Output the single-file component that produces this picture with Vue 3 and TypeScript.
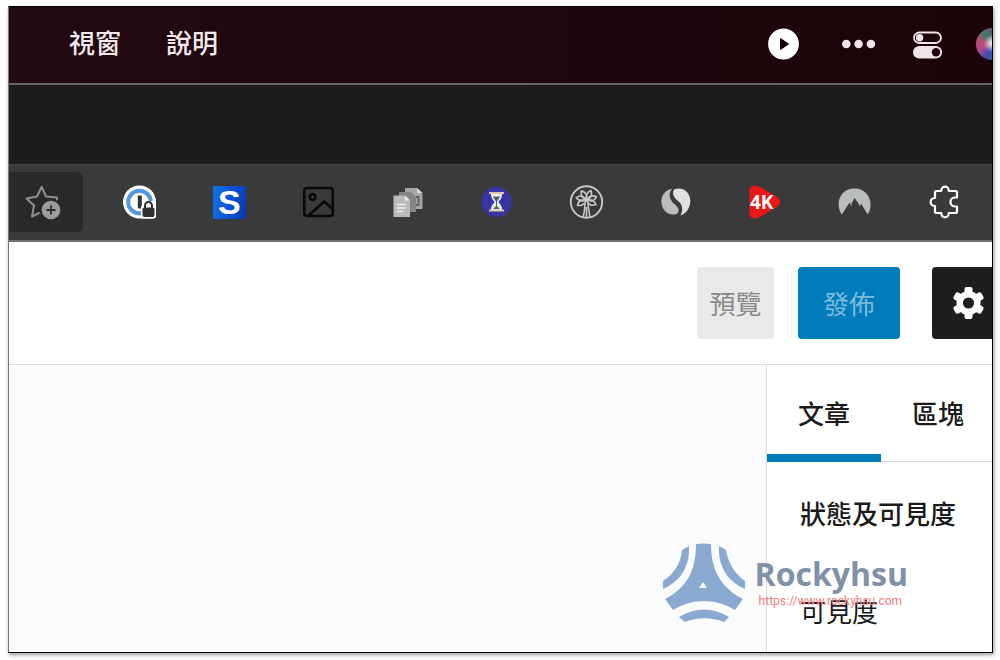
<script setup lang="ts">
import { ref } from 'vue'

type TabId = 'post' | 'block'
interface Tab { id: TabId; label: string }

const menus: string[] = ['視窗', '說明']
const tabs: Tab[] = [
  { id: 'post', label: '文章' },
  { id: 'block', label: '區塊' },
]
const activeTab = ref<TabId>('post')
const fronds: number[] = [-118, -74, -27, 27, 74, 118]
const teeth: number[] = [0, 60, 120, 180, 240, 300]
</script>

<template>
  <div class="page">
    <main class="screen">
      <header class="menubar">
        <nav class="menus">
          <button v-for="m in menus" :key="m" type="button" class="menu">{{ m }}</button>
        </nav>
        <div class="status">
          <button type="button" class="status-btn" aria-label="播放">
            <svg width="32" height="32" viewBox="0 0 32 32"><circle cx="15.500" cy="16" r="15.400" fill="#fff" /><path d="M12.500 10.500 L20.500 16 L12.500 21.500Z" fill="#150509" stroke="#150509" stroke-linejoin="round" /></svg>
          </button>
          <button type="button" class="status-btn more" aria-label="更多">
            <svg width="34" height="32" viewBox="0 0 34 32" fill="#eee5e8"><circle cx="4.300" cy="16" r="4.300" /><circle cx="16.600" cy="16" r="4.300" /><circle cx="28.900" cy="16" r="4.300" /></svg>
          </button>
          <button type="button" class="status-btn" aria-label="控制中心">
            <svg width="32" height="32" viewBox="0 0 32 32"><rect x="2" y="4.500" width="27" height="10.500" rx="5.250" fill="none" stroke="#eee5e8" stroke-width="1.800" /><circle cx="7.600" cy="9.800" r="3.700" fill="#eee5e8" /><rect x="1" y="18" width="29" height="12.500" rx="6.250" fill="#eee5e8" /><circle cx="24" cy="24.200" r="4.200" fill="#1d0409" /></svg>
          </button>
          <button type="button" class="status-btn siri" aria-label="Siri"></button>
        </div>
      </header>

      <div class="tabstrip"></div>

      <div class="toolbar">
        <button type="button" class="favorite" aria-label="加入最愛">
          <svg width="40" height="40" viewBox="0 0 40 40"><path d="M32 17.500 V15.500 L21 14.500 L16.700 4.800 L12 14.500 L1.500 16.500 L9 23.500 L7 34.500 L14 31" fill="none" stroke="#8f8f8f" stroke-width="2" stroke-linejoin="round" stroke-linecap="round" /><circle cx="26" cy="28" r="9.300" fill="#9b9b9b" /><path d="M26 23.500v9M21.500 28h9" stroke="#292929" stroke-width="1.800" /></svg>
        </button>
        <div class="extensions">
          <button type="button" class="ext" aria-label="1Password">
            <svg width="36" height="36" viewBox="0 0 36 36"><path d="M17.500 1.500 A16.500 16.500 0 1 0 17.500 34.500 H31 Q34 34.500 34 31 V18 A16.500 16.500 0 0 0 17.500 1.500Z" fill="#fff" /><circle cx="17.500" cy="18" r="11.300" fill="#fff" stroke="#5099e2" stroke-width="4" /><rect x="15.800" y="11.500" width="4" height="13" rx=".8" fill="#333" /><path d="M19 34.500V22H22V17.500L34 17V32Q34 34.500 31 34.500Z" fill="#fff" /><rect x="20.500" y="23.500" width="12" height="9.500" rx="2" fill="#303030" /><path d="M23 24V21.500a3.500 3.500 0 0 1 7 0V24" fill="none" stroke="#303030" stroke-width="2" /></svg>
          </button>
          <button type="button" class="ext" aria-label="S"><span class="s-logo">S</span></button>
          <button type="button" class="ext" aria-label="圖片">
            <svg width="36" height="36" viewBox="0 0 36 36" fill="none" stroke="#090909" stroke-width="2.600"><rect x="3.300" y="4" width="28.500" height="28" rx="2.500" /><circle cx="11.600" cy="13" r="2.900" /><path d="M7.500 31.500 L23.300 17.500 L31.500 25" /></svg>
          </button>
          <button type="button" class="ext" aria-label="複製文件">
            <svg width="36" height="36" viewBox="0 0 36 36"><path d="M15 4H27L32.500 9V25H15Z" fill="#a6a6a6" /><path d="M27 4V9H32.500Z" fill="#d8d8d8" /><path d="M9 8H21L26 13V28H9Z" fill="#858585" /><path d="M26 13h2.500v8h-2.500" fill="none" stroke="#666" stroke-width="2" /><path d="M3.500 11.500H15L20 16.500V33H3.500Z" fill="#bababa" /><path d="M15 11.500V16.500H20Z" fill="#eee" /><path d="M7 20.500h9M7 24h9M7 27.500h6" stroke="#ededed" stroke-width="1.400" /></svg>
          </button>
          <button type="button" class="ext" aria-label="沙漏">
            <svg width="36" height="36" viewBox="0 0 36 36"><circle cx="17.500" cy="18" r="15.200" fill="#3834a1" /><path d="M12 10h11c0 5-2.500 6-3.500 8 1 2 3.500 3 3.500 8H12c0-5 2.500-6 3.500-8-1-2-3.500-3-3.500-8Z" fill="#eef1f3" /><path d="M14 12.500h7c-.5 2.500-2.500 3-3 5.500v4l3 3h-7l3-3v-4c-.5-2.500-2.500-3-3-5.500Z" fill="#4c6470" /><path d="M10 9h15M10 26.500h15" stroke="#e0c5a8" stroke-width="2.200" /></svg>
          </button>
          <button type="button" class="ext" aria-label="棕櫚樹">
            <svg width="36" height="36" viewBox="0 0 36 36" fill="none" stroke="#c7c7c7" stroke-width="1.600" stroke-linejoin="round"><circle cx="17.500" cy="18" r="15.700" stroke-width="1.900" /><path d="M16 19Q16 26 14.200 33M19 19Q19.500 26 21 33M17.500 23V33" /><path v-for="f in fronds" :key="f" d="M17.500 16 Q13 10.500 17 5.500 Q22.500 10 17.500 16Z" :transform="`rotate(${f} 17.5 16)`" /></svg>
          </button>
          <button type="button" class="ext" aria-label="雙色圓">
            <svg width="36" height="36" viewBox="0 0 36 36"><path d="M14 4.800 C6 6.500 2.500 13 3.600 20 C5 28 12 32 18.500 30 C22 28 21 24 17 20.500 C12 16.500 9.500 11 14 4.800Z" fill="#bcbcbc" /><path d="M16.500 5.300 C24 2.500 30.500 7 32 14 C33.500 22 29 29.500 22.500 31.500 C25.500 25 24.500 20.500 20 17 C15.500 13.500 13.500 8.500 16.500 5.300Z" fill="#e0e0e0" /></svg>
          </button>
          <button type="button" class="ext" aria-label="4K">
            <svg width="36" height="36" viewBox="0 0 36 36"><path d="M2.500 5Q6 -1 13 3L30 13Q36 18 30 23L13 33Q6 37 2.500 31Z" fill="#ed1515" /><text x="3" y="25" class="four-k-text">4K</text></svg>
          </button>
          <button type="button" class="ext" aria-label="NordVPN">
            <svg width="36" height="36" viewBox="0 0 36 36"><path d="M4.800 30.500 C-2.500 20 3 4.500 17.500 4.500 C32 4.500 37.500 20 30.700 30.500 L24 19.500 L22.800 22.500 L21.500 19.500 L17.500 14 L14.500 19.500 L14.500 22.500 L12.500 18.500Z" fill="#babdbd" /></svg>
          </button>
          <button type="button" class="ext" aria-label="擴充功能">
            <svg width="36" height="36" viewBox="0 0 36 36" fill="none" stroke="#fff" stroke-width="2.200" stroke-linejoin="round"><path d="M10.500 7H15.200C15.200 1.200 22.800 1.200 22.800 7H29.500Q31 7 31 8.500V13.500H29C23 13.500 23 22.500 29 22.500H31V27.500Q31 29 29.500 29H22.800C22.800 34.800 15.200 34.800 15.200 29H10.500Q9 29 9 27.500V22C3.200 22 3.200 14 9 14V8.500Q9 7 10.500 7Z" /></svg>
          </button>
        </div>
      </div>

      <div class="editor-header">
        <button type="button" class="preview">預覽</button>
        <button type="button" class="publish">發佈</button>
        <button type="button" class="settings" aria-label="設定">
          <svg width="36" height="36" viewBox="0 0 36 36" fill="#fff"><rect v-for="t in teeth" :key="t" x="14.500" y="2" width="8" height="12" rx="2" :transform="`rotate(${t} 18.5 18)`" /><circle cx="18.500" cy="18" r="12" /><circle cx="18.500" cy="18" r="5.600" fill="#1e1e1e" /></svg>
        </button>
      </div>

      <div class="workspace">
        <section class="canvas"></section>
        <aside class="sidebar">
          <div class="tabs" role="tablist">
            <button
              v-for="t in tabs" :key="t.id" type="button" role="tab" class="tab"
              :class="{ active: activeTab === t.id }" :aria-selected="activeTab === t.id"
              @click="activeTab = t.id"
            >{{ t.label }}</button>
          </div>
          <h2 class="panel-title">狀態及可見度</h2>
          <p class="panel-row">可見度</p>
        </aside>
      </div>

      <div class="brand">
        <svg class="brand-logo" width="84" height="80" viewBox="0 0 84 80" fill="#8aa9d0">
          <path d="M34 1Q41 0 49 1C49 29 60 45 81 56L73 67C53 55 31 55 11 67L3 56C24 45 34 29 34 1ZM41 39L37 45H45Z" fill-rule="evenodd" />
          <path d="M27 3C28 23 19 38 1 46V38C12 31 19 20 20 7Z" />
          <path d="M57 3C56 23 65 38 83 46V38C73 31 66 20 64 7Z" />
          <path d="M17 74C33 64 51 64 67 74L62 79C50 74 35 74 23 79Z" />
        </svg>
        <div class="brand-text">
          <strong class="brand-name">Rockyhsu</strong>
          <a class="brand-link" href="https://www.rockyhsu.com">https://www.rockyhsu.com</a>
        </div>
      </div>
    </main>
  </div>
</template>

<style>
body { margin: 0; background: #fff; }
</style>

<style scoped>
.page {
  box-sizing: border-box;
  min-height: 100vh;
  padding: 6px 7px 7px 8px;
  display: flex;
  font-family: "Noto Sans CJK TC", sans-serif;
}
.screen {
  position: relative;
  flex: 1;
  min-width: 0;
  display: flex;
  flex-direction: column;
  overflow: hidden;
  border: 1px solid #000;
  border-left-color: #777;
  box-shadow: 1px 2px 4px rgba(0, 0, 0, 0.4);
}
button {
  margin: 0;
  padding: 0;
  border: 0;
  background: none;
  font: inherit;
  color: inherit;
  flex: none;
}
svg { display: block; }

.menubar {
  box-sizing: border-box;
  display: flex;
  justify-content: space-between;
  align-items: center;
  height: 78px;
  padding: 0 0 3px 60px;
  background: linear-gradient(90deg, #210a12, #1d0409);
  border-bottom: 2px solid #666;
}
.menus { display: flex; gap: 45px; padding-bottom: 3px; }
.menu { font-size: 26px; line-height: 40px; font-weight: 500; color: #f3e9ec; }
.status { display: flex; align-items: center; gap: 38px; margin-right: -16px; }
.status-btn { width: 32px; height: 32px; }
.more { width: 34px; margin: 0 -2px 0 4px; }
.siri {
  margin-left: -6px;
  border-radius: 50%;
  background:
    radial-gradient(circle at 52% 48%, #fff 0, rgba(255, 255, 255, 0) 38%),
    conic-gradient(#62586c, #4c77a8 140deg, #354caa 200deg, #b9478d 245deg, #b64e6c 285deg, #3f7769 325deg, #62586c);
}
.tabstrip { height: 79px; background: #1c1c1c; }
.toolbar {
  box-sizing: border-box;
  display: flex;
  align-items: center;
  height: 78px;
  padding-bottom: 1px;
  background: #3a3a3a;
  border-top: 1px solid #444;
  border-bottom: 2px solid #707070;
}
.favorite {
  width: 74px;
  height: 60px;
  padding-left: 16px;
  border-radius: 0 6px 6px 0;
  background: #292929;
}
.extensions {
  flex: 1;
  display: flex;
  justify-content: space-between;
  padding: 0 30px 0 39px;
}
.ext { width: 36px; height: 36px; display: grid; place-items: center; }
.s-logo {
  width: 33px;
  height: 33px;
  background: linear-gradient(100deg, #1173e5, #0b4fd0 60%, #0938a8);
  color: #fff;
  font: bold 34px/33px "Liberation Sans", sans-serif;
  text-align: center;
}
.four-k-text { font: bold 19px "Open Sans", sans-serif; fill: #fff; }

.editor-header {
  display: flex;
  align-items: center;
  justify-content: flex-end;
  height: 122px;
  background: #fff;
  border-bottom: 1px solid #dcdcdc;
}
.preview, .publish, .settings { height: 72px; border-radius: 4px; font-size: 26px; }
.preview, .publish { padding-bottom: 2px; }
.preview { width: 77px; margin-right: 24px; background: #e9e9e9; color: #8a8a8a; }
.publish { width: 102px; margin-right: 32px; background: #007cba; color: #7fb9dc; }
.settings {
  width: 72px;
  margin-right: -12px;
  background: #1e1e1e;
  display: grid;
  place-items: center;
}

.workspace { flex: 1; display: flex; background: #fff; }
.canvas { flex: 1; background: #fbfbfb; }
.sidebar { width: 225px; border-left: 1px solid #dcdcdc; color: #1b1b1b; }
.tabs { display: flex; height: 96px; border-bottom: 1px solid #d8d8d8; }
.tab {
  height: 97px;
  padding: 0 31px 2px;
  font-size: 26px;
  font-weight: 500;
}
.tab.active { box-shadow: inset 0 -8px #007cba; }
.panel-title {
  margin: 31px 0 0 33px;
  font-size: 26px;
  line-height: 40px;
  font-weight: 500;
  white-space: nowrap;
}
.panel-row { margin: 58px 0 0 33px; font-size: 26px; line-height: 40px; }

.brand {
  position: absolute;
  right: 84px;
  bottom: 29px;
  display: flex;
  gap: 9px;
}
.brand-text { display: flex; flex-direction: column; padding-top: 12px; }
.brand-name {
  font: bold 32px/38px "Open Sans", sans-serif;
  color: #8191a7;
}
.brand-link {
  margin-left: 4px;
  font: 12px/16px Roboto, sans-serif;
  color: #ee7d82;
  text-decoration: none;
}
</style>
